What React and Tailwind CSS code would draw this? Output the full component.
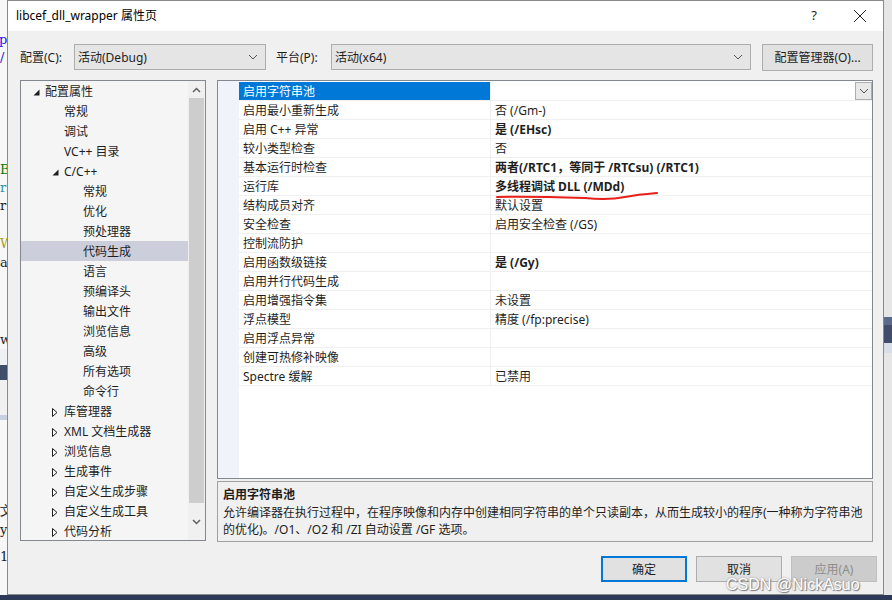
import React from 'react'

const font = { fontFamily: '"Noto Sans", "Noto Sans CJK SC", sans-serif' }

const tree = [
  { label: '配置属性', level: 0, arrow: 'open' },
  { label: '常规', level: 1 },
  { label: '调试', level: 1 },
  { label: 'VC++ 目录', level: 1 },
  { label: 'C/C++', level: 1, arrow: 'open' },
  { label: '常规', level: 2 },
  { label: '优化', level: 2 },
  { label: '预处理器', level: 2 },
  { label: '代码生成', level: 2, selected: true },
  { label: '语言', level: 2 },
  { label: '预编译头', level: 2 },
  { label: '输出文件', level: 2 },
  { label: '浏览信息', level: 2 },
  { label: '高级', level: 2 },
  { label: '所有选项', level: 2 },
  { label: '命令行', level: 2 },
  { label: '库管理器', level: 1, arrow: 'closed' },
  { label: 'XML 文档生成器', level: 1, arrow: 'closed' },
  { label: '浏览信息', level: 1, arrow: 'closed' },
  { label: '生成事件', level: 1, arrow: 'closed' },
  { label: '自定义生成步骤', level: 1, arrow: 'closed' },
  { label: '自定义生成工具', level: 1, arrow: 'closed' },
  { label: '代码分析', level: 1, arrow: 'closed' },
]

const props = [
  ['启用字符串池', '', false],
  ['启用最小重新生成', '否 (/Gm-)', false],
  ['启用 C++ 异常', '是 (/EHsc)', true],
  ['较小类型检查', '否', false],
  ['基本运行时检查', '两者(/RTC1，等同于 /RTCsu) (/RTC1)', true],
  ['运行库', '多线程调试 DLL (/MDd)', true],
  ['结构成员对齐', '默认设置', false],
  ['安全检查', '启用安全检查 (/GS)', false],
  ['控制流防护', '', false],
  ['启用函数级链接', '是 (/Gy)', true],
  ['启用并行代码生成', '', false],
  ['启用增强指令集', '未设置', false],
  ['浮点模型', '精度 (/fp:precise)', false],
  ['启用浮点异常', '', false],
  ['创建可热修补映像', '', false],
  ['Spectre 缓解', '已禁用', false],
]

const Chevron = ({ className }) => (
  <svg width="10" height="6" viewBox="0 0 10 6" className={className}>
    <path d="M1 1 L5 5 L9 1" fill="none" stroke="#555" strokeWidth="1" />
  </svg>
)

const Arrow = ({ type }) => {
  if (type === 'open') {
    return (
      <svg width="7" height="7" viewBox="0 0 7 7">
        <path d="M6.5 0.5 L6.5 6.5 L0.5 6.5 Z" fill="#1e1e1e" />
      </svg>
    )
  }
  return (
    <svg width="6" height="9" viewBox="0 0 6 9">
      <path d="M0.5 0.5 L5 4.5 L0.5 8.5 Z" fill="none" stroke="#1e1e1e" strokeWidth="1" />
    </svg>
  )
}

const TreeRow = ({ item }) => {
  const pad = item.level === 0 ? 'pl-[12px]' : item.level === 1 ? 'pl-[31px]' : 'pl-[62px]'
  return (
    <div className={`h-[20px] flex items-center pt-[2px] ${item.selected ? 'bg-[#cccedb]' : ''}`}>
      <div className={`flex items-center ${pad}`}>
        {item.arrow && (
          <span className="w-[12px] flex items-center">
            <Arrow type={item.arrow} />
          </span>
        )}
        {!item.arrow && item.level < 2 && <span className="w-[12px]" />}
        <span className="text-[12px] text-[#1e1e1e] whitespace-nowrap">{item.label}</span>
      </div>
    </div>
  )
}

export default function App() {
  return (
    <div className="w-[892px] h-[600px] relative overflow-hidden bg-[#e8e8e8]" style={font}>
      <div className="flex h-[595px]">
        {/* background editor strip */}
        <div className="w-[7px] shrink-0 bg-[#f7f7f7] flex flex-col text-[13px] overflow-hidden" style={{ fontFamily: '"DejaVu Serif", serif' }}>
          <div className="h-[31px] shrink-0" />
          <div className="h-[18px] leading-[18px] shrink-0 text-[#2222dd] -ml-[1px]">p</div>
          <div className="h-[18px] leading-[18px] shrink-0 text-[#2222dd]">/</div>
          <div className="h-[94px] shrink-0" />
          <div className="h-[18px] leading-[18px] shrink-0 text-[#0a7a0a]">B</div>
          <div className="h-[18px] leading-[18px] shrink-0 text-[#2b91af]">r</div>
          <div className="h-[18px] leading-[18px] shrink-0 text-[#222]">r</div>
          <div className="h-[20px] shrink-0" />
          <div className="h-[18px] leading-[18px] shrink-0 text-[#a0a020]">W</div>
          <div className="h-[19px] leading-[19px] shrink-0 text-[#222]">a</div>
          <div className="h-[59px] shrink-0" />
          <div className="h-[18px] leading-[18px] shrink-0 text-[#222]">w</div>
          <div className="h-[16px] shrink-0 bg-[#eef0f4]" />
          <div className="h-[15px] shrink-0 bg-[#3f4d6b]" />
          <div className="h-[35px] shrink-0 bg-[#f0f0f0]" />
          <div className="h-[5px] shrink-0 bg-[#c8d0e0]" />
          <div className="h-[81px] shrink-0" />
          <div className="h-[20px] leading-[20px] shrink-0 text-[#222]">文</div>
          <div className="h-[18px] leading-[18px] shrink-0 text-[#222]">y</div>
          <div className="h-[9px] shrink-0" />
          <div className="h-[18px] leading-[18px] shrink-0 text-[#222]">1</div>
        </div>

        {/* dialog */}
        <div className="w-[877px] shrink-0 flex flex-col border border-[#8a8a8a] bg-[#f0f0f0]">
          <div className="h-[30px] bg-white flex items-center pl-[8px] shrink-0">
            <span className="text-[12px] text-[#000]">libcef_dll_wrapper 属性页</span>
            <div className="ml-auto flex items-center">
              <span className="text-[13px] text-[#222] w-[46px] text-center">?</span>
              <svg width="46" height="14" viewBox="0 0 46 14">
                <path d="M17 1 L29 13 M29 1 L17 13" stroke="#222" strokeWidth="1" />
              </svg>
            </div>
          </div>

          <div className="flex-1 flex flex-col pl-[12px] pr-[10px] pt-[13px]">
            {/* config row */}
            <div className="flex items-center h-[26px]">
              <span className="text-[12px] text-[#1e1e1e] w-[54px] pt-[2px]">配置(C):</span>
              <div className="w-[192px] h-[26px] bg-[#e5e5e5] border border-[#adadad] flex items-center px-[3px]">
                <span className="text-[12px] text-[#1e1e1e] pt-[2px]">活动(Debug)</span>
                <Chevron className="ml-auto mr-[4px]" />
              </div>
              <span className="text-[12px] text-[#1e1e1e] ml-[10px] w-[55px] pt-[2px]">平台(P):</span>
              <div className="w-[420px] h-[26px] bg-[#e5e5e5] border border-[#adadad] flex items-center px-[3px]">
                <span className="text-[12px] text-[#1e1e1e] pt-[2px]">活动(x64)</span>
                <Chevron className="ml-auto mr-[4px]" />
              </div>
              <div className="ml-auto w-[111px] h-[27px] bg-[#e1e1e1] border border-[#adadad] flex items-center justify-center">
                <span className="text-[12px] text-[#1e1e1e] pt-[2px]">配置管理器(O)...</span>
              </div>
            </div>

            {/* main */}
            <div className="flex mt-[10px] gap-[11px]">
              {/* tree */}
              <div className="w-[186px] shrink-0 h-[461px] border border-[#828790] bg-[#f5f5f5] flex overflow-hidden">
                <div className="flex-1 flex flex-col">
                  {tree.map((item, i) => (
                    <TreeRow key={i} item={item} />
                  ))}
                </div>
                <div className="w-[17px] flex flex-col items-center bg-[#f0f0f0]">
                  <div className="h-[17px] flex items-center justify-center">
                    <svg width="9" height="6" viewBox="0 0 9 6">
                      <path d="M1 5 L4.5 1.5 L8 5" fill="none" stroke="#606060" strokeWidth="1.5" />
                    </svg>
                  </div>
                  <div className="w-[15px] h-[405px] bg-[#cdcdcd]" />
                  <div className="flex-1 flex items-center justify-center">
                    <svg width="9" height="6" viewBox="0 0 9 6">
                      <path d="M1 1 L4.5 4.5 L8 1" fill="none" stroke="#606060" strokeWidth="1.5" />
                    </svg>
                  </div>
                </div>
              </div>

              {/* right side */}
              <div className="w-[656px] shrink-0 flex flex-col">
                <div className="h-[399px] border border-[#828790] bg-white flex">
                  <div className="w-[21px] bg-[#f0f4fa]" />
                  <div className="flex-1 flex flex-col pt-[1px]">
                    {props.map(([name, value, bold], i) => (
                      <div key={i} className="h-[19px] flex border-b border-[#f0f0f0]">
                        <div className={`w-[252px] flex items-center pl-[4px] pt-[2px] border-r border-[#f0f0f0] ${i === 0 ? 'bg-[#0078d7] text-white' : 'text-[#1e1e1e]'}`}>
                          <span className="text-[12px] whitespace-nowrap">{name}</span>
                        </div>
                        <div className="flex-1 flex items-center pl-[4px]">
                          <span className={`text-[12px] text-[#1e1e1e] whitespace-nowrap pt-[2px] ${bold ? 'font-bold' : ''}`}>{value}</span>
                          {i === 0 && (
                            <div className="ml-auto w-[17px] h-[18px] bg-[#e8e8e8] border border-[#adadad] flex items-center justify-center">
                              <Chevron />
                            </div>
                          )}
                        </div>
                      </div>
                    ))}
                  </div>
                </div>
                <div className="h-[61px] mt-[2px] border border-[#a0a0a0] bg-[#f0f0f0] px-[5px] pt-[4px] flex flex-col">
                  <span className="text-[12px] font-bold text-[#1e1e1e] leading-[18px]">启用字符串池</span>
                  <span className="text-[12px] text-[#1e1e1e] leading-[17px]">
                    允许编译器在执行过程中，在程序映像和内存中创建相同字符串的单个只读副本，从而生成较小的程序(一种称为字符串池的优化)。/O1、/O2 和 /ZI 自动设置 /GF 选项。
                  </span>
                </div>
              </div>
            </div>

            {/* buttons */}
            <div className="flex justify-end gap-[9px] mt-[14px] mr-[-4px]">
              <div className="w-[86px] h-[26px] border-2 border-[#0078d7] bg-[#e1e1e1] flex items-center justify-center">
                <span className="text-[12px] text-[#1e1e1e] pt-[2px]">确定</span>
              </div>
              <div className="w-[86px] h-[26px] border border-[#adadad] bg-[#e1e1e1] flex items-center justify-center">
                <span className="text-[12px] text-[#1e1e1e] pt-[2px]">取消</span>
              </div>
              <div className="w-[86px] h-[26px] border border-[#bfbfbf] bg-[#cccccc] flex items-center justify-center">
                <span className="text-[12px] text-[#8d8d8d] pt-[2px]">应用(A)</span>
              </div>
            </div>
          </div>
        </div>

        {/* right background strip */}
        <div className="flex-1 flex flex-col bg-[#e6e6e6]">
          <div className="h-[317px]" />
          <div className="h-[8px] bg-[#5a6a8a]" />
          <div className="h-[18px] bg-[#3f4d6b]" />
          <div className="h-[10px] bg-[#d8dde8]" />
        </div>
      </div>
      <div className="h-[5px] bg-[#2c3a58]" />

      {/* red underline annotation */}
      <svg className="absolute left-[495px] top-[190px]" width="170" height="16" viewBox="0 0 170 16">
        <path d="M2 7 C30 6, 60 7, 90 8 C110 10, 120 9, 130 7 C140 5, 150 4, 162 3" fill="none" stroke="#e8201a" strokeWidth="2" strokeLinecap="round" />
      </svg>

      {/* watermark */}
      <div className="absolute left-[726px] top-[573px] text-[16px] text-white" style={{ fontFamily: '"Liberation Sans", sans-serif', textShadow: '0 0 2px #888, 1px 1px 1px #777' }}>
        CSDN @NickAsuo
      </div>
    </div>
  )
}
